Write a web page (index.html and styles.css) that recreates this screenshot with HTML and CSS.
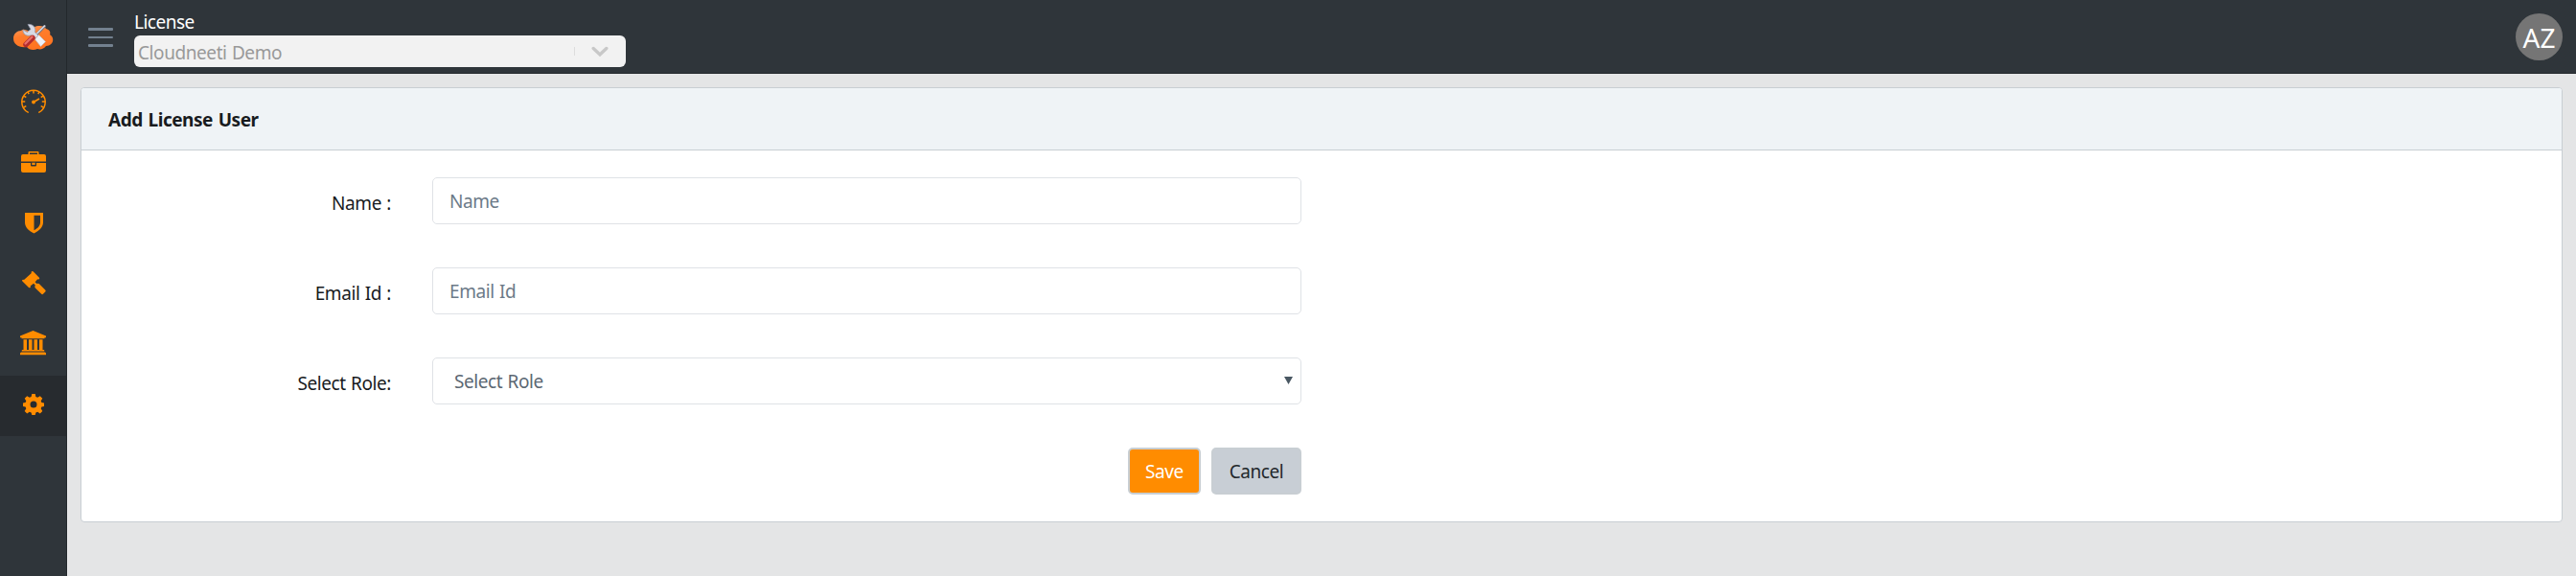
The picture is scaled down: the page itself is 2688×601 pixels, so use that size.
FILE: index.html
```html
<!DOCTYPE html>
<html lang="en">
<head>
<meta charset="utf-8">
<title>Add License User</title>
<link rel="stylesheet" href="styles.css">
</head>
<body>
<div class="app">
  <aside class="sidebar">
    <div class="brand">
      <svg width="42" height="30" viewBox="0 0 42 30">
        <defs><linearGradient id="cloud" x1="0" y1="0" x2="0.4" y2="1"><stop offset="0" stop-color="#ffa066"/><stop offset="0.45" stop-color="#ff7c2b"/><stop offset="1" stop-color="#ff7420"/></linearGradient></defs>
        <path d="M8 8C11 5 13 8 17 8C20 3 31 1 34 6C38 7 39 10 38 12C44 16 41 24 34 24C32 27 28 28 25 27C21 29 16 28 14 25C5 26 0 22 0 16C0 11 4 8 8 8Z" fill="url(#cloud)"/>
        <path d="M32.500 3.500L23 13" stroke="#6f7482" stroke-width="2.800" stroke-linecap="round"/>
        <path d="M32.500 3L23 12.500" stroke="#d9dbe4" stroke-width="1.600" stroke-linecap="round"/>
        <path d="M15 1.500C20 .5 24 5 22.500 9.500L26 13L22.500 16.500L18.500 12.800C14 14.500 9.500 11.500 10 7L14.500 9.500L18 6.500Z" fill="#d7d9e4" stroke="#8b90a2" stroke-width=".7"/>
        <path d="M26.500 12.500L33.500 19.500L28.500 24.500L22.500 17Z" fill="#f0f1f6" stroke="#b9bdc9" stroke-width=".7"/>
        <path d="M20 15.500L13 22.500" stroke="#b52d2c" stroke-width="5.500" stroke-linecap="round"/>
        <path d="M19.500 14.500L12.500 21.500" stroke="#e8706a" stroke-width="2.300" stroke-linecap="round"/>
      </svg>
    </div>
    <nav class="nav">
      <a class="nav-item"><svg width="28" height="28" viewBox="0 0 28 28" fill="none" stroke="#ff8c00" stroke-width="1.500"><path d="M8.200 25.200A12.200 12.200 0 1 1 19.800 25.200" stroke-linecap="round"/><path d="M14 2v3.500M8 3.800l1.200 2.400M20 3.800l-1.200 2.400M3.800 8.200l2.500 1.300M24.200 8.200l-2.500 1.300M1.800 14h3.400M26.200 14h-3.400M3.800 20l2.500-1.300M24.200 20l-2.500-1.300"/><path d="M14 14.500L20 11" stroke-width="1.800"/><circle cx="14" cy="14.500" r="1.900" fill="#ff8c00" stroke="none"/></svg></a>
      <a class="nav-item"><svg width="28" height="28" viewBox="0 0 28 28" fill="#ff8c00"><path fill-rule="evenodd" d="M8.500 6V4Q8.500 3 9.500 3H18.500Q19.500 3 19.500 4V6H25Q27 6 27 8V13.600H1V8Q1 6 3 6ZM10 4.500V6H18V4.500Z"/><path d="M1 14.900H11V17.500Q11 18.500 12 18.500H16Q17 18.500 17 17.500V14.900H27V23Q27 25 25 25H3Q1 25 1 23Z"/><path d="M12.300 14.700h3.400v2.400h-3.400z"/></svg></a>
      <a class="nav-item"><svg width="28" height="28" viewBox="0 0 28 28" fill="#ff8c00"><path fill-rule="evenodd" d="M5 4H24V14C24 19.500 19 23 14.500 25.500C9.500 23 5 19.500 5 14ZM14.500 6.800V22.300C18.500 20.100 21 17.500 21 14V6.800Z"/></svg></a>
      <a class="nav-item"><svg width="28" height="28" viewBox="0 0 28 28" fill="#ff8c00"><path d="M12 2.300Q12.800 1.500 13.600 2.300L20 8.700Q20.600 9.500 19.800 10.200Q19 10.900 18.200 10.200L15.600 13.300L17.300 15L18.200 14.700Q19.300 14.500 20 15.200L26.200 21.400Q27.300 22.500 26.200 23.600L24.200 25.600Q23.100 26.700 22 25.600L15.800 19.400Q15 18.600 15.500 17.300L15.800 16.500L14 14.800L10.600 17.500Q11.300 18.300 10.600 19Q9.800 19.700 9 19L2.400 12.500Q1.600 11.700 2.400 11Q3.200 10.300 4 11L11.800 3.900Q11.200 3.100 12 2.300Z"/></svg></a>
      <a class="nav-item"><svg width="28" height="28" viewBox="0 0 28 28" fill="#ff8c00"><path d="M13.500 1L27 6.600V8.300H25.500V9.300H1.500V8.300H0V6.600ZM3.500 10.200H7V21H9V10.200H12.500V21H14.500V10.200H18V21H20V10.200H23.500V21H25.200V22.600H1.800V21H3.500ZM1 23.500H26L27 24.500V26.300H0V24.500Z"/></svg></a>
      <a class="nav-item active"><svg width="28" height="28" viewBox="0 0 28 28" fill="#ff8c00"><path fill-rule="evenodd" d="M12.300 4h3.400l.7 3 1.800.8 2.600-1.600 2.500 2.500-1.600 2.600.7 1.700 2.600.6v3.400l-2.600.6-.7 1.700 1.600 2.600-2.500 2.500-2.600-1.600-1.800.8-.7 2.400h-3.400l-.7-2.400-1.800-.8-2.600 1.600-2.500-2.500 1.600-2.600-.7-1.700-2.600-.6v-3.400l2.600-.6.7-1.700-1.600-2.600 2.500-2.500 2.600 1.600 1.800-.8ZM14 11.600a3.500 3.500 0 1 0 0 7a3.500 3.500 0 1 0 0-7Z"/></svg></a>
    </nav>
  </aside>
  <div class="main">
    <header class="topbar">
      <div class="menu"><span></span><span></span><span></span></div>
      <div class="license">
        <div class="license-label">License</div>
        <div class="license-select"><span class="license-value">Cloudneeti Demo</span><i class="divider"></i>
          <svg width="18" height="12" viewBox="0 0 18 12" fill="none" stroke="#c8c8c8" stroke-width="3.400" stroke-linecap="round"><path d="M2.200 2.500L9 9L15.800 2.500"/></svg>
        </div>
      </div>
      <div class="avatar">AZ</div>
    </header>
    <section class="card">
      <h1 class="card-header">Add License User</h1>
      <form class="form">
        <div class="row"><label class="label">Name :</label><div class="control">Name</div></div>
        <div class="row"><label class="label">Email Id :</label><div class="control">Email Id</div></div>
        <div class="row"><label class="label">Select Role:</label><div class="control select">Select Role<svg width="9" height="8" viewBox="0 0 9 8"><path d="M0 0H9L4.500 8Z" fill="#495762"/></svg></div></div>
        <div class="actions"><button type="button" class="btn save">Save</button><button type="button" class="btn cancel">Cancel</button></div>
      </form>
    </section>
  </div>
</div>
</body>
</html>
```
FILE: styles.css
```css
* { box-sizing: border-box; }
body { margin: 0; background: #e4e5e6; color: #181b1e; font: 19px/28px "Noto Sans", "Open Sans", sans-serif; letter-spacing: -0.42px; word-spacing: 0.8px; }
.app { display: flex; height: 601px; overflow: hidden; }
.sidebar { width: 70px; background: #2f353a; border-right: 1px solid #23282c; }
.brand { height: 77px; padding: 24px 0 0 14px; }
.brand svg { display: block; }
.nav-item { display: flex; height: 63px; align-items: center; justify-content: center; padding: 0 0 5px 1px; }
.nav-item.active { background: #272b2f; }
.main { flex: 1; }
.topbar { display: flex; height: 77px; background: #2f353a; border-bottom: 1px solid #23282c; padding: 0 14px 0 22px; }
.menu { display: flex; flex-direction: column; gap: 6px; width: 26px; margin-top: 29px; }
.menu span { height: 2.500px; border-radius: 1px; background: #73818f; }
.license { margin-left: 22px; width: 513px; padding-top: 9px; }
.license-label { color: #fff; letter-spacing: -0.5px; }
.license-select { display: flex; align-items: center; height: 33px; background: #f2f2f2; border-radius: 6px; padding: 0 18px 0 4px; color: #999; }
.license-value { flex: 1; padding-top: 3px; }
.divider { width: 1px; height: 9px; background: #ddd; margin-right: 17px; }
.avatar { margin: 14px 0 0 auto; width: 49px; height: 49px; border-radius: 50%; background: #757575; color: #fff; text-align: center; font-size: 28px; line-height: 50px; letter-spacing: 0; }
.card { margin: 14px 14px 0; height: 454px; border: 1px solid #c8ced3; border-radius: 4px; background: #fff; overflow: hidden; }
.card-header { margin: 0; height: 65px; padding: 18px 28px; background: #eff3f6; border-bottom: 1px solid #c8ced3; font-size: 19px; font-weight: 700; line-height: 30px; letter-spacing: -0.5px; word-spacing: 1.5px; }
.form { display: flex; flex-direction: column; gap: 45px; width: 1273px; padding-top: 28px; }
.row { display: flex; height: 49px; gap: 43px; }
.label { width: 323px; text-align: right; padding-top: 13px; }
.control { flex: 1; display: flex; align-items: center; border: 1px solid #dfe2e6; border-radius: 5px; padding: 1px 8px 0 17px; color: #6c7a88; }
.select { padding-left: 22px; justify-content: space-between; color: #5c6873; }
.select svg { margin-bottom: 2px; }
.actions { display: flex; justify-content: flex-end; gap: 11px; }
.btn { height: 49px; padding: 0; border: 2px solid #c8ced3; border-radius: 5px; font: inherit; letter-spacing: inherit; color: #23282c; }
.save { width: 76px; background: #ff8c00; color: #fff; }
.cancel { width: 94px; background: #c8ced5; }
```
